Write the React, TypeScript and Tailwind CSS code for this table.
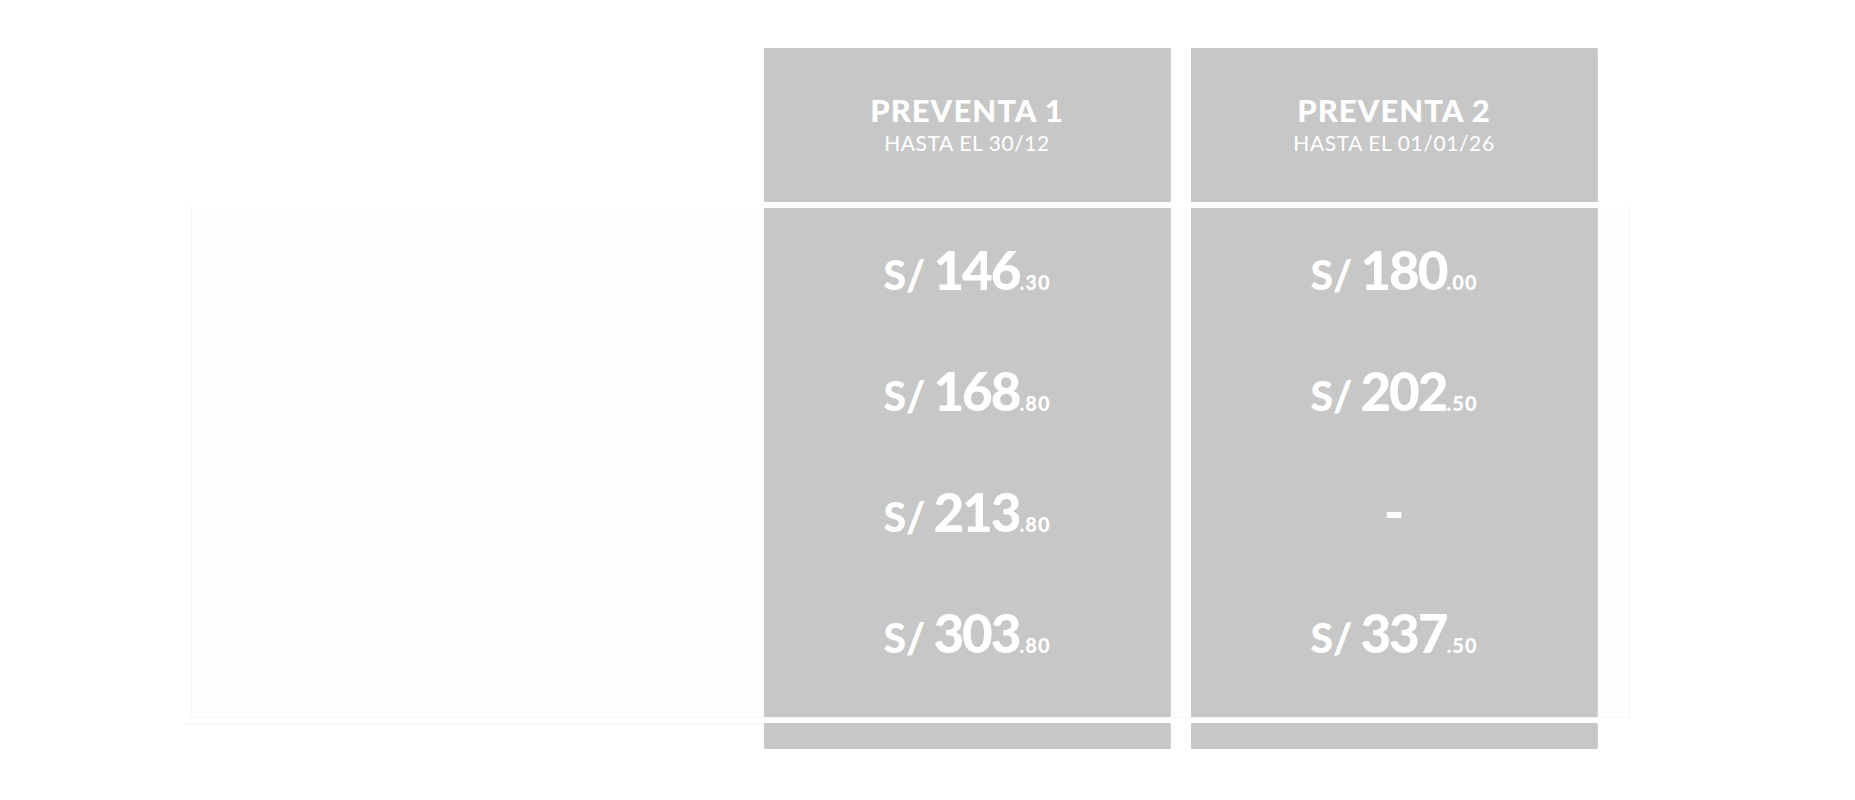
const plans = [
  { name: "CLUB 10", note: "INGRESO HASTA LAS 10PM" },
  { name: "CLUB 11", note: "INGRESO HASTA LAS 11PM" },
  { name: "CLUB ALL NIGHT", note: "INGRESO HASTA LAS 3AM" },
  { name: "SUPER VIP", note: "INGRESO HASTA LAS 3AM" },
];

const columns = [
  {
    title: "PREVENTA 1",
    until: "HASTA EL 30/12",
    prices: [
      ["146", ".30"],
      ["168", ".80"],
      ["213", ".80"],
      ["303", ".80"],
    ],
  },
  {
    title: "PREVENTA 2",
    until: "HASTA EL 01/01/26",
    prices: [["180", ".00"], ["202", ".50"], null, ["337", ".50"]],
  },
];

const Price = ({ value }: { value: string[] | null }) => {
  if (!value) {
    return <div className="text-[54px] font-black leading-none text-white -mt-[2px]">-</div>;
  }
  return (
    <div className="flex items-baseline leading-none text-white">
      <span className="text-[41px] font-black mr-[8px]">S/</span>
      <span className="text-[53px] font-black tracking-[-2px]">{value[0]}</span>
      <span className="text-[20px] font-black tracking-[1px]">{value[1]}</span>
    </div>
  );
};

export default function App() {
  return (
    <div className="w-full h-[800px] bg-white pt-[48px] font-[Lato,'Liberation_Sans',sans-serif] overflow-hidden">
      {/* column headers */}
      <div className="flex gap-[20px] pl-[764px]">
        {columns.map((col) => (
          <div
            key={col.title}
            className="w-[407px] h-[154px] bg-[#c7c7c7] border-r border-dotted border-[#dcdcdc] flex flex-col items-center pt-[47px] text-white leading-none"
          >
            <div className="text-[31px] font-black tracking-[1px]">{col.title}</div>
            <div className="text-[21px] font-normal tracking-[0.6px] mt-[6px]">{col.until}</div>
          </div>
        ))}
      </div>

      {/* body */}
      <div className="mt-[5px] ml-[191px] w-[1439px] h-[511px] flex border-x border-b border-[#f5f5f5] bg-[#fefefe]">
        <div className="w-[572px] pl-[65px] pt-[2px]">
          {plans.map((p) => (
            <div key={p.name} className="h-[121px] pt-[32px] text-white leading-none [text-shadow:0_0_1px_rgba(0,0,0,0.045)]">
              <div className="text-[54px] font-bold tracking-[1px] whitespace-nowrap">{p.name}</div>
              <div className="text-[22px] font-normal mt-[5px] whitespace-nowrap">{p.note}</div>
            </div>
          ))}
        </div>
        <div className="flex gap-[20px] mt-[1px]">
          {columns.map((col) => (
            <div
              key={col.title}
              className="w-[407px] h-[509px] bg-[#c7c7c7] border-r border-dotted border-[#dcdcdc] pt-[1px]"
            >
              {col.prices.map((v, i) => (
                <div key={i} className="h-[121px] flex items-center justify-center">
                  <Price value={v} />
                </div>
              ))}
            </div>
          ))}
        </div>
      </div>

      {/* footer */}
      <div className="mt-[5px] flex">
        <div className="ml-[185px] w-[579px] h-[26px] border-t border-[#f7f7f7]" />
        <div className="flex gap-[20px]">
          {columns.map((col) => (
            <div key={col.title} className="w-[407px] h-[26px] bg-[#c7c7c7] border-r border-dotted border-[#dcdcdc]" />
          ))}
        </div>
      </div>
    </div>
  );
}
